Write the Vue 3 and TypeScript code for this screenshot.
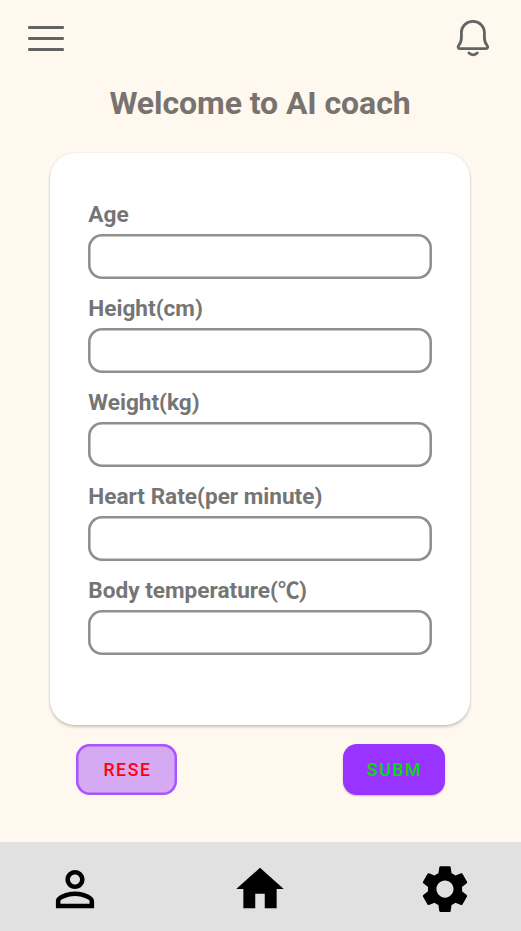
<script setup lang="ts">
import { reactive } from 'vue'

interface Field {
  key: string
  label: string
  unit?: string
  close?: string
}

const fields: Field[] = [
  { key: 'age', label: 'Age' },
  { key: 'height', label: 'Height(cm)' },
  { key: 'weight', label: 'Weight(kg)' },
  { key: 'heartRate', label: 'Heart Rate(per minute)' },
  { key: 'temperature', label: 'Body temperature(', unit: '℃', close: ')' },
]

const values = reactive<Record<string, string>>({
  age: '',
  height: '',
  weight: '',
  heartRate: '',
  temperature: '',
})

function reset(): void {
  fields.forEach((f) => (values[f.key] = ''))
}
</script>

<template>
  <form class="screen" @submit.prevent>
    <header class="topbar">
      <svg class="menu" viewBox="0 0 36 26">
        <path d="M1.300 1.500h33.400M1.300 12.500h33.400M1.300 23.500h33.400" />
      </svg>
      <svg class="bell" viewBox="0 0 36 40">
        <path d="M17.900 3.400C11.200 3.400 6.400 8.300 6.400 14.600v4.600c0 4-.9 6.200-2.600 8.200-1.300 1.500-.7 3.300 1 3.300h26.200c1.700 0 2.300-1.800 1-3.300-1.700-2-2.600-4.200-2.600-8.200v-4.600C29.400 8.300 24.600 3.400 17.900 3.400z" />
        <path d="M13.900 34.900c2.200 2.500 6.200 2.500 8.400 0" />
      </svg>
    </header>

    <h1 class="title">Welcome to AI coach</h1>

    <section class="card">
      <label v-for="f in fields" :key="f.key" class="field">
        <span class="label">{{ f.label }}<span v-if="f.unit" class="unit">{{ f.unit }}</span>{{ f.close }}</span>
        <input v-model="values[f.key]" class="input" type="text" />
      </label>
    </section>

    <div class="actions">
      <button class="btn reset" type="button" @click="reset">RESE</button>
      <button class="btn submit" type="submit">SUBM</button>
    </div>

    <nav class="navbar">
      <svg viewBox="-0.150 -0.200 24.300 24.300">
        <path d="M12 5.900c1.160 0 2.100.940 2.100 2.100s-.940 2.100-2.100 2.100S9.900 9.160 9.900 8s.940-2.100 2.100-2.100m0 9c2.970 0 6.100 1.460 6.100 2.100v1.100H5.900V17c0-.640 3.130-2.100 6.100-2.100M12 4C9.790 4 8 5.790 8 8s1.790 4 4 4 4-1.790 4-4-1.790-4-4-4zm0 9c-2.670 0-8 1.340-8 4v3h16v-3c0-2.660-5.330-4-8-4z" />
      </svg>
      <svg viewBox="-0.200 -0.250 24.400 24.400">
        <path d="M10 20v-6h4v6h5v-8h3L12 3 2 12h3v8z" />
      </svg>
      <svg viewBox="-0.200 -0.250 24.400 24.400">
        <path d="M19.140 12.940c.040-.300.060-.610.060-.940 0-.320-.020-.640-.070-.940l2.030-1.580c.180-.140.230-.410.120-.610l-1.920-3.320c-.120-.220-.370-.290-.590-.220l-2.390.960c-.500-.380-1.030-.700-1.620-.940l-.360-2.540c-.040-.240-.240-.410-.480-.410h-3.840c-.240 0-.430.170-.470.410l-.360 2.540c-.590.240-1.130.570-1.620.940l-2.390-.960c-.220-.080-.470 0-.590.220L2.740 8.870c-.120.210-.080.470.120.610l2.030 1.580c-.050.300-.090.630-.090.940s.020.640.070.940l-2.030 1.580c-.180.140-.230.410-.120.610l1.920 3.320c.120.220.370.290.590.220l2.390-.960c.500.380 1.030.700 1.620.940l.360 2.540c.050.240.240.410.480.410h3.840c.240 0 .440-.170.470-.410l.360-2.540c.590-.240 1.130-.560 1.620-.940l2.390.960c.220.080.470 0 .590-.220l1.920-3.320c.120-.220.070-.470-.120-.610l-2.010-1.580zM12 15.600c-1.980 0-3.600-1.620-3.600-3.600s1.620-3.600 3.600-3.600 3.600 1.620 3.600 3.600-1.620 3.600-3.600 3.600z" />
      </svg>
    </nav>
  </form>
</template>

<style>
body {
  margin: 0;
  background: #fff8ee;
}
</style>

<style scoped>
.screen {
  display: flex;
  flex-direction: column;
  box-sizing: border-box;
  width: 521px;
  height: 931px;
  background: #fff8ee;
  font-family: Roboto, 'Noto Sans CJK SC', sans-serif;
}

.topbar {
  display: flex;
  justify-content: space-between;
  align-items: flex-start;
  height: 66px;
  box-sizing: border-box;
  padding: 18px 30px 0 28px;
}

.topbar svg {
  fill: none;
  stroke: #636363;
  stroke-width: 2.800;
  stroke-linecap: round;
  stroke-linejoin: round;
}

.menu {
  width: 36px;
  height: 26px;
  margin-top: 8px;
}

.bell {
  width: 36px;
  height: 40px;
}

.title {
  margin: 17px 0 1px;
  padding-right: 1px;
  height: 40px;
  line-height: 40px;
  font-size: 32px;
  font-weight: 700;
  letter-spacing: -0.080px;
  text-align: center;
  color: #78736e;
}

.card {
  display: flex;
  flex-direction: column;
  gap: 14px;
  box-sizing: border-box;
  width: 420px;
  height: 572px;
  margin: 29px 0 0 50px;
  padding: 46px 38px 0;
  border-radius: 25px;
  background: #fff;
  box-shadow: 0 2px 3px rgba(0, 0, 0, 0.200), 0 0 2px rgba(0, 0, 0, 0.100);
}

.field {
  display: flex;
  flex-direction: column;
  height: 80px;
}

.label {
  box-sizing: border-box;
  height: 35px;
  padding: 1px 0 0 0.300px;
  line-height: 30px;
  font-size: 22.600px;
  font-weight: 700;
  color: #757575;
  white-space: nowrap;
}

.unit {
  font-size: 21.500px;
  line-height: 1;
  letter-spacing: -0.500px;
}

.input {
  box-sizing: border-box;
  width: 344px;
  height: 45px;
  padding: 0 14px;
  border: 0;
  border-radius: 14px;
  background: #fff;
  box-shadow: inset 0 0 0 2.600px #909090;
  outline: none;
  font: inherit;
}

.actions {
  display: flex;
  justify-content: space-between;
  padding: 19px 76px 0;
}

.btn {
  box-sizing: border-box;
  width: 102px;
  height: 51px;
  padding: 0 0 0 1px;
  border: 0;
  border-radius: 14px;
  font-family: inherit;
  font-size: 17.700px;
  font-weight: 500;
  letter-spacing: 1.600px;
}

.reset {
  width: 101px;
  padding-left: 2px;
  background: #d5aaf2;
  color: #ff0008;
  box-shadow: inset 0 0 0 2.500px #a855ff;
}

.submit {
  background: #9933ff;
  color: #00e005;
  box-shadow: 0 1px 2px rgba(0, 0, 0, 0.250);
}

.navbar {
  display: flex;
  justify-content: space-between;
  align-items: center;
  box-sizing: border-box;
  height: 89px;
  margin-top: auto;
  padding: 5px 47px 0 46px;
  background: #e1e1e1;
}

.navbar svg {
  width: 58px;
  height: 58px;
  fill: #000;
}
</style>
